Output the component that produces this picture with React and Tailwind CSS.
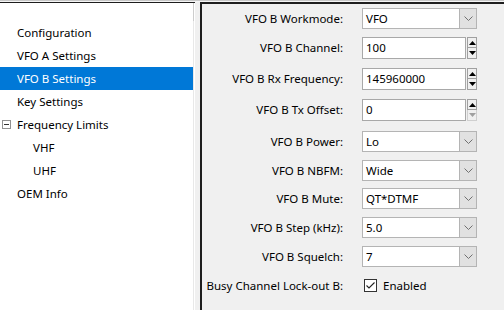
import React from "react";

const font = { fontFamily: '"Noto Sans", "Liberation Sans", sans-serif' };

function Chevron() {
  return (
    <svg width="9" height="5" viewBox="0 0 9 5">
      <path d="M0.5 0.5 L4.5 4.5 L8.5 0.5" fill="none" stroke="#707070" strokeWidth="1" />
    </svg>
  );
}

function Combo({ value }) {
  return (
    <div className="flex h-[21px] w-[115px] border border-[#b4b4b4] bg-white">
      <div className="flex-1 pl-[3px] leading-[19px] text-black">{value}</div>
      <div className="flex w-[17px] items-center justify-center border-l border-[#b4b4b4] bg-[#e1e1e1]">
        <Chevron />
      </div>
    </div>
  );
}

function Tri({ up, disabled }) {
  return (
    <svg width="7" height="4" viewBox="0 0 7 4">
      <path
        d={up ? "M0 4 L3.5 0 L7 4 Z" : "M0 0 L3.5 4 L7 0 Z"}
        fill={disabled ? "#a0a0a0" : "#000"}
      />
    </svg>
  );
}

function Spin({ value, downDisabled }) {
  return (
    <div className="flex h-[22px] w-[115px]">
      <div className="h-full w-[104px] border border-[#a8a8a8] bg-white pl-[3px] leading-[20px] text-black">
        {value}
      </div>
      <div className="ml-[1px] flex w-[10px] flex-col">
        <div className="flex h-[11px] items-center justify-center border border-[#a0a0a0] bg-[#f0f0f0]">
          <Tri up />
        </div>
        <div
          className={
            "flex h-[11px] items-center justify-center border border-t-0 bg-[#f0f0f0] " +
            (downDisabled ? "border-[#cfcfcf]" : "border-[#a0a0a0]")
          }
        >
          <Tri disabled={downDisabled} />
        </div>
      </div>
    </div>
  );
}

function Row({ label, children, className }) {
  return (
    <div className={"flex items-center " + className}>
      <div className="w-[141px] whitespace-nowrap text-right text-black">{label}</div>
      <div className="ml-[19px]">{children}</div>
    </div>
  );
}

function TreeItem({ children, selected, indent, className = "" }) {
  return (
    <div
      className={
        "flex h-[23px] items-center whitespace-nowrap " +
        (selected ? "bg-[#0078d7] text-white " : "text-black ") +
        (indent ? "pl-[33px] " : "pl-[17px] ") +
        className
      }
    >
      {children}
    </div>
  );
}

export default function App() {
  return (
    <div className="h-[310px] w-[504px] overflow-hidden bg-[#f0f0f0] text-[11.5px]" style={font}>
      <div className="h-[1px] bg-[#c8c8c8]" />
      <div className="h-[1px] bg-[#f5f5f5]" />
      <div className="flex h-[308px]">
        {/* Left tree panel */}
        <div className="relative h-full w-[195px] border-t border-[#1e1e1e] bg-white">
          <div className="flex h-full">
            <div className="w-[193px] pt-[18px]">
              <TreeItem>Configuration</TreeItem>
              <TreeItem>VFO A Settings</TreeItem>
              <TreeItem selected>VFO B Settings</TreeItem>
              <TreeItem>Key Settings</TreeItem>
              <div className="relative">
                <TreeItem>Frequency Limits</TreeItem>
                <div className="absolute left-[2px] top-[7px] flex h-[9px] w-[9px] items-center justify-center border border-[#919191] bg-white">
                  <div className="h-[1px] w-[5px] bg-[#333]" />
                </div>
              </div>
              <TreeItem indent>VHF</TreeItem>
              <TreeItem indent>UHF</TreeItem>
              <TreeItem>OEM Info</TreeItem>
            </div>
            <div className="flex w-[2px] flex-col">
              <div className="h-[18px] w-[1px] bg-[#cdcdcd]" />
              <div className="w-[1px] flex-1 bg-[#e8e8e8]" />
            </div>
          </div>
        </div>
        <div className="w-[5px]" />
        {/* Right settings panel */}
        <div className="h-full flex-1 border-l-2 border-t-2 border-[#1e1e1e] bg-[#f0f0f0]">
          <div className="flex flex-col pt-[4px]">
            <Row label="VFO B Workmode:" className="h-[21px]">
              <Combo value="VFO" />
            </Row>
            <Row label="VFO B Channel:" className="mt-[8px] h-[22px]">
              <Spin value="100" />
            </Row>
            <Row label="VFO B Rx Frequency:" className="mt-[9px] h-[22px]">
              <Spin value="145960000" />
            </Row>
            <Row label="VFO B Tx Offset:" className="mt-[9px] h-[22px]">
              <Spin value="0" downDisabled />
            </Row>
            <Row label="VFO B Power:" className="mt-[10px] h-[21px]">
              <Combo value="Lo" />
            </Row>
            <Row label="VFO B NBFM:" className="mt-[8px] h-[21px]">
              <Combo value="Wide" />
            </Row>
            <Row label="VFO B Mute:" className="mt-[7px] h-[21px]">
              <Combo value="QT*DTMF" />
            </Row>
            <Row label="VFO B Step (kHz):" className="mt-[8px] h-[21px]">
              <Combo value="5.0" />
            </Row>
            <Row label="VFO B Squelch:" className="mt-[8px] h-[21px]">
              <Combo value="7" />
            </Row>
            <Row label="Busy Channel Lock-out B:" className="mt-[8px] h-[21px]">
              <div className="flex items-center">
                <div className="ml-[2px] flex h-[13px] w-[13px] items-center justify-center border border-[#333] bg-white">
                  <svg width="11" height="11" viewBox="0 0 11 11">
                    <path d="M1.5 5.5 L4 8 L9.5 2.5" fill="none" stroke="#222" strokeWidth="1.1" />
                  </svg>
                </div>
                <span className="ml-[6px] text-black">Enabled</span>
              </div>
            </Row>
          </div>
        </div>
      </div>
    </div>
  );
}
